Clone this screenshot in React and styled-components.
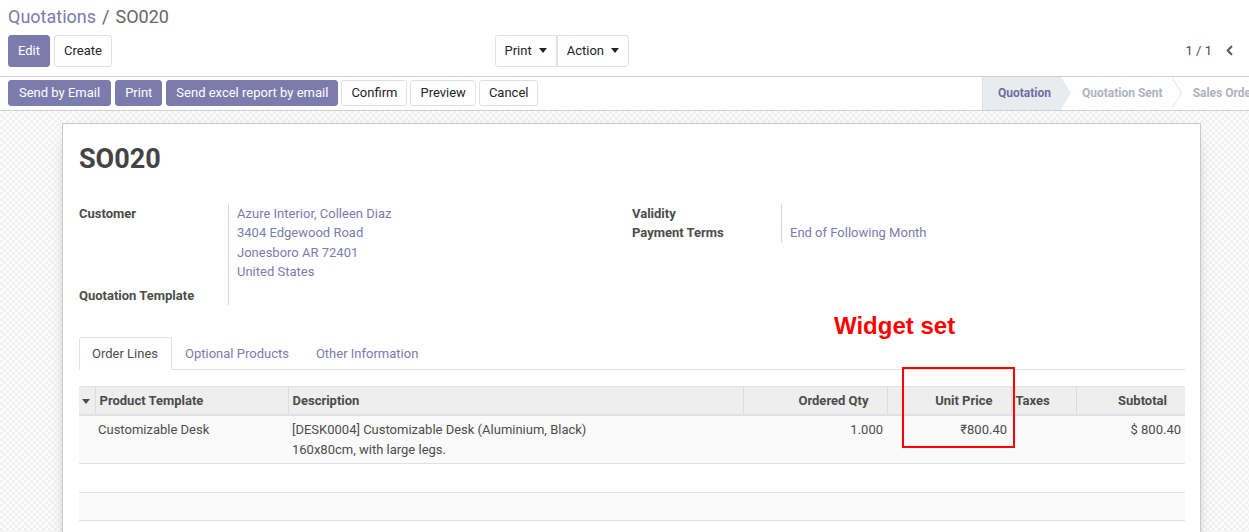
import React from "react";
import styled, { createGlobalStyle } from "styled-components";
import { ChevronLeft } from "lucide-react";

const GlobalStyle = createGlobalStyle`
  html, body {
    margin: 0;
    padding: 0;
    overflow: hidden;
  }
  body {
    font-family: Roboto, "Liberation Sans", sans-serif;
    font-size: 13px;
    line-height: 1.5;
    color: #4c4c4c;
    background: #fff;
  }
  * { box-sizing: border-box; }
`;

const PURPLE = "#7c7bad";

const App = () => {
  return (
    <Page>
      <GlobalStyle />
      <ControlPanel>
        <Breadcrumb>
          <a>Quotations</a>
          <span className="sep">/</span>
          <span>SO020</span>
        </Breadcrumb>
        <CpRow>
          <CpLeft>
            <Btn primary>Edit</Btn>
            <Btn>Create</Btn>
            <BtnGroup>
              <Btn grouped>
                Print <Caret />
              </Btn>
              <Btn grouped>
                Action <Caret />
              </Btn>
            </BtnGroup>
          </CpLeft>
          <Pager>
            <span>1 / 1</span>
            <ChevronLeft size={15} strokeWidth={3.5} color="#5f5f5f" />
          </Pager>
        </CpRow>
      </ControlPanel>

      <StatusBar>
        <StatusButtons>
          <Btn primary small wide>Send by Email</Btn>
          <Btn primary small>Print</Btn>
          <Btn primary small>Send excel report by email</Btn>
          <Btn small>Confirm</Btn>
          <Btn small>Preview</Btn>
          <Btn small>Cancel</Btn>
        </StatusButtons>
        <Pipeline>
          <Stage active first>Quotation</Stage>
          <Stage>Quotation Sent</Stage>
          <Stage>Sales Order</Stage>
        </Pipeline>
      </StatusBar>

      <SheetBg>
        <Sheet>
          <Title>SO020</Title>
          <Groups>
            <Group>
              <Label>Customer</Label>
              <Value pad>
                <a>Azure Interior, Colleen Diaz</a>
                <a>3404 Edgewood Road</a>
                <a>Jonesboro AR 72401</a>
                <a>United States</a>
              </Value>
              <Label>Quotation Template</Label>
              <Value />
            </Group>
            <Group>
              <Label>Validity</Label>
              <Value />
              <Label>Payment Terms</Label>
              <Value>
                <a>End of Following Month</a>
              </Value>
            </Group>
          </Groups>

          <Notebook>
            <Annotation>Widget set</Annotation>
            <Tabs>
              <Tab active>Order Lines</Tab>
              <Tab>Optional Products</Tab>
              <Tab>Other Information</Tab>
            </Tabs>
            <TableWrap>
              <HighlightBox />
              <Table>
                <colgroup>
                  <col style={{ width: 16 }} />
                  <col style={{ width: 193 }} />
                  <col style={{ width: 455 }} />
                  <col style={{ width: 144 }} />
                  <col style={{ width: 124 }} />
                  <col style={{ width: 65 }} />
                  <col style={{ width: 109 }} />
                </colgroup>
                <thead>
                  <tr>
                    <Th handle>
                      <Caret dark />
                    </Th>
                    <Th>Product Template</Th>
                    <Th>Description</Th>
                    <Th num>Ordered Qty</Th>
                    <Th num>Unit Price</Th>
                    <Th>Taxes</Th>
                    <Th num>Subtotal</Th>
                  </tr>
                </thead>
                <tbody>
                  <Tr>
                    <Td />
                    <Td>Customizable Desk</Td>
                    <Td>
                      [DESK0004] Customizable Desk (Aluminium, Black)
                      <br />
                      160x80cm, with large legs.
                    </Td>
                    <Td num>1.000</Td>
                    <Td num>₹800.40</Td>
                    <Td />
                    <Td num>$ 800.40</Td>
                  </Tr>
                  <Tr>
                    <Td colSpan={7}>&nbsp;</Td>
                  </Tr>
                  <Tr>
                    <Td colSpan={7}>&nbsp;</Td>
                  </Tr>
                </tbody>
              </Table>
            </TableWrap>
          </Notebook>
        </Sheet>
      </SheetBg>
    </Page>
  );
};

export default App;

const Page = styled.div`
  width: 1249px;
  height: 532px;
  display: flex;
  flex-direction: column;
  overflow: hidden;
`;

const ControlPanel = styled.div`
  padding: 3px 12px 9px 8px;
  border-bottom: 1px solid #d0d0d0;
`;

const Breadcrumb = styled.div`
  font-size: 18px;
  line-height: 27px;
  color: #666;

  a {
    color: ${PURPLE};
  }

  .sep {
    margin: 0 6px;
  }
`;

const CpRow = styled.div`
  margin-top: 5px;
  display: flex;
  align-items: center;
  justify-content: space-between;
`;

const CpLeft = styled.div`
  width: 621px;
  display: flex;
  align-items: center;
  gap: 4px;
`;

const BtnGroup = styled.div`
  margin-left: auto;
  display: flex;
`;

const Btn = styled.button`
  font-family: Roboto, "Liberation Sans", sans-serif;
  font-size: 13px;
  line-height: 19.5px;
  padding: ${(p) => (p.small ? (p.wide ? "2px 10px" : "2px 9px") : "5px 9px")};
  border: 1px solid ${(p) => (p.primary ? PURPLE : "#dee2e6")};
  background: ${(p) => (p.primary ? PURPLE : "#fff")};
  color: ${(p) => (p.primary ? "#fff" : "#212529")};
  border-radius: ${(p) => (p.grouped ? "0" : "3px")};
  display: inline-flex;
  align-items: center;
  white-space: nowrap;
  cursor: pointer;

  & + & {
    margin-left: ${(p) => (p.grouped ? "-1px" : "0")};
  }
  &:first-child {
    border-radius: ${(p) => (p.grouped ? "3px 0 0 3px" : "3px")};
  }
  &:last-child {
    border-radius: ${(p) => (p.grouped ? "0 3px 3px 0" : "3px")};
  }
`;

const Caret = styled.span`
  display: inline-block;
  width: 0;
  height: 0;
  margin-left: ${(p) => (p.dark ? "0" : "7px")};
  border-top: 5px solid ${(p) => (p.dark ? "#4c4c4c" : "#212529")};
  border-left: 4px solid transparent;
  border-right: 4px solid transparent;
  vertical-align: middle;
`;

const Pager = styled.div`
  display: flex;
  align-items: center;
  gap: 10px;
  color: #4c4c4c;
  font-size: 13px;
`;

const StatusBar = styled.div`
  height: 34px;
  display: flex;
  align-items: center;
  border-bottom: 1px solid #d0d0d0;
  padding-left: 8px;
`;

const StatusButtons = styled.div`
  flex: 1;
  display: flex;
  align-items: center;
  gap: 4px;

  button {
    margin-left: 0 !important;
  }
  button:nth-child(4),
  button:nth-child(5),
  button:nth-child(6) {
    margin-left: -1px !important;
  }
`;

const Pipeline = styled.div`
  width: 267px;
  height: 33px;
  display: flex;
  overflow: hidden;
  flex-shrink: 0;
`;

const Stage = styled.div`
  position: relative;
  height: 33px;
  display: flex;
  align-items: center;
  flex-shrink: 0;
  white-space: nowrap;
  font-size: 12px;
  font-weight: bold;
  padding: ${(p) => (p.first ? "0 10px 0 15px" : "0 9px 0 21px")};
  color: ${(p) => (p.active ? "#6e6da3" : "#aeb3bd")};
  background: ${(p) => (p.active ? "#e9ecef" : "transparent")};
  border-left: ${(p) => (p.first ? "1px solid #dcdfe3" : "none")};

  &::after {
    content: "";
    position: absolute;
    top: 0;
    right: -10px;
    width: 0;
    height: 0;
    border-top: 16.5px solid transparent;
    border-bottom: 16.5px solid transparent;
    border-left: 10px solid ${(p) => (p.active ? "#e9ecef" : "#dee2e6")};
    z-index: 2;
  }

  &::before {
    content: "";
    display: ${(p) => (p.active ? "none" : "block")};
    position: absolute;
    top: 0;
    right: -9px;
    width: 0;
    height: 0;
    border-top: 16.5px solid transparent;
    border-bottom: 16.5px solid transparent;
    border-left: 10px solid #fff;
    z-index: 3;
  }
`;

const SheetBg = styled.div`
  flex: 1;
  padding: 12px 48px 0 62px;
  background-color: #fbfbfb;
  background-image: repeating-conic-gradient(#f1f1f1 0 25%, #fcfcfc 0 50%);
  background-size: 6px 6px;
  overflow: hidden;
`;

const Sheet = styled.div`
  min-height: 600px;
  background: #fff;
  border: 1px solid #c9c9c9;
  box-shadow: 0 5px 20px -15px #000;
  padding: 20px 15px 0 16px;
`;

const Title = styled.h1`
  margin: 0;
  font-size: 27px;
  line-height: 31px;
  font-weight: bold;
  color: #444;
`;

const Groups = styled.div`
  margin-top: 29px;
  display: grid;
  grid-template-columns: 1fr 1fr;
`;

const Group = styled.div`
  display: grid;
  grid-template-columns: 149px 1fr;
  align-content: start;
`;

const Label = styled.div`
  font-weight: bold;
  color: #4c4c4c;
  min-height: 19.5px;
`;

const Value = styled.div`
  min-height: 19.5px;
  border-left: 1px solid #d8d8d8;
  padding-left: 8px;
  padding-bottom: ${(p) => (p.pad ? "4px" : "0")};
  display: flex;
  flex-direction: column;

  a {
    color: ${PURPLE};
  }
`;

const Notebook = styled.div`
  position: relative;
  margin-top: 32px;
`;

const Annotation = styled.div`
  position: absolute;
  left: 755px;
  top: -24px;
  font-family: "Liberation Sans", Arial, sans-serif;
  font-weight: bold;
  font-size: 24px;
  line-height: 26px;
  color: #f00;
`;

const Tabs = styled.div`
  display: flex;
  border-bottom: 1px solid #dee2e6;
`;

const Tab = styled.div`
  padding: 6px 13px 5px 12px;
  margin-bottom: -1px;
  border: 1px solid ${(p) => (p.active ? "#dee2e6" : "transparent")};
  border-bottom-color: ${(p) => (p.active ? "#fff" : "transparent")};
  border-radius: 3px 3px 0 0;
  background: ${(p) => (p.active ? "#fff" : "transparent")};
  color: ${(p) => (p.active ? "#4c4c4c" : PURPLE)};
`;

const TableWrap = styled.div`
  position: relative;
  margin-top: 16px;
`;

const HighlightBox = styled.div`
  position: absolute;
  left: 823px;
  top: -19px;
  width: 113px;
  height: 81px;
  border: 2px solid #f00;
  z-index: 5;
`;

const Table = styled.table`
  width: 1106px;
  border-collapse: collapse;
  table-layout: fixed;
`;

const Th = styled.th`
  background: #eeeeee;
  font-weight: bold;
  color: #4c4c4c;
  padding: ${(p) => (p.handle ? "4px 0 4px 3px" : p.num ? "4px 18px 4px 4px" : "4px")};
  text-align: ${(p) => (p.num ? "right" : "left")};
  border-top: 1px solid #e4e4e4;
  border-bottom: 2px solid #dee2e6;
  border-left: ${(p) => (p.handle ? "none" : "1px solid #dcdcdc")};
  white-space: nowrap;
  overflow: hidden;

  &:last-child {
    padding-right: 18px;
  }
`;

const Tr = styled.tr`
  background: #fafafa;
  border-bottom: 1px solid #dee2e6;

  &:nth-child(2) {
    background: #fff;
  }
`;

const Td = styled.td`
  padding: 4px;
  vertical-align: top;
  text-align: ${(p) => (p.num ? "right" : "left")};
  color: #4c4c4c;
  white-space: nowrap;

  &:nth-child(2) {
    padding-left: 3px;
  }
`;
